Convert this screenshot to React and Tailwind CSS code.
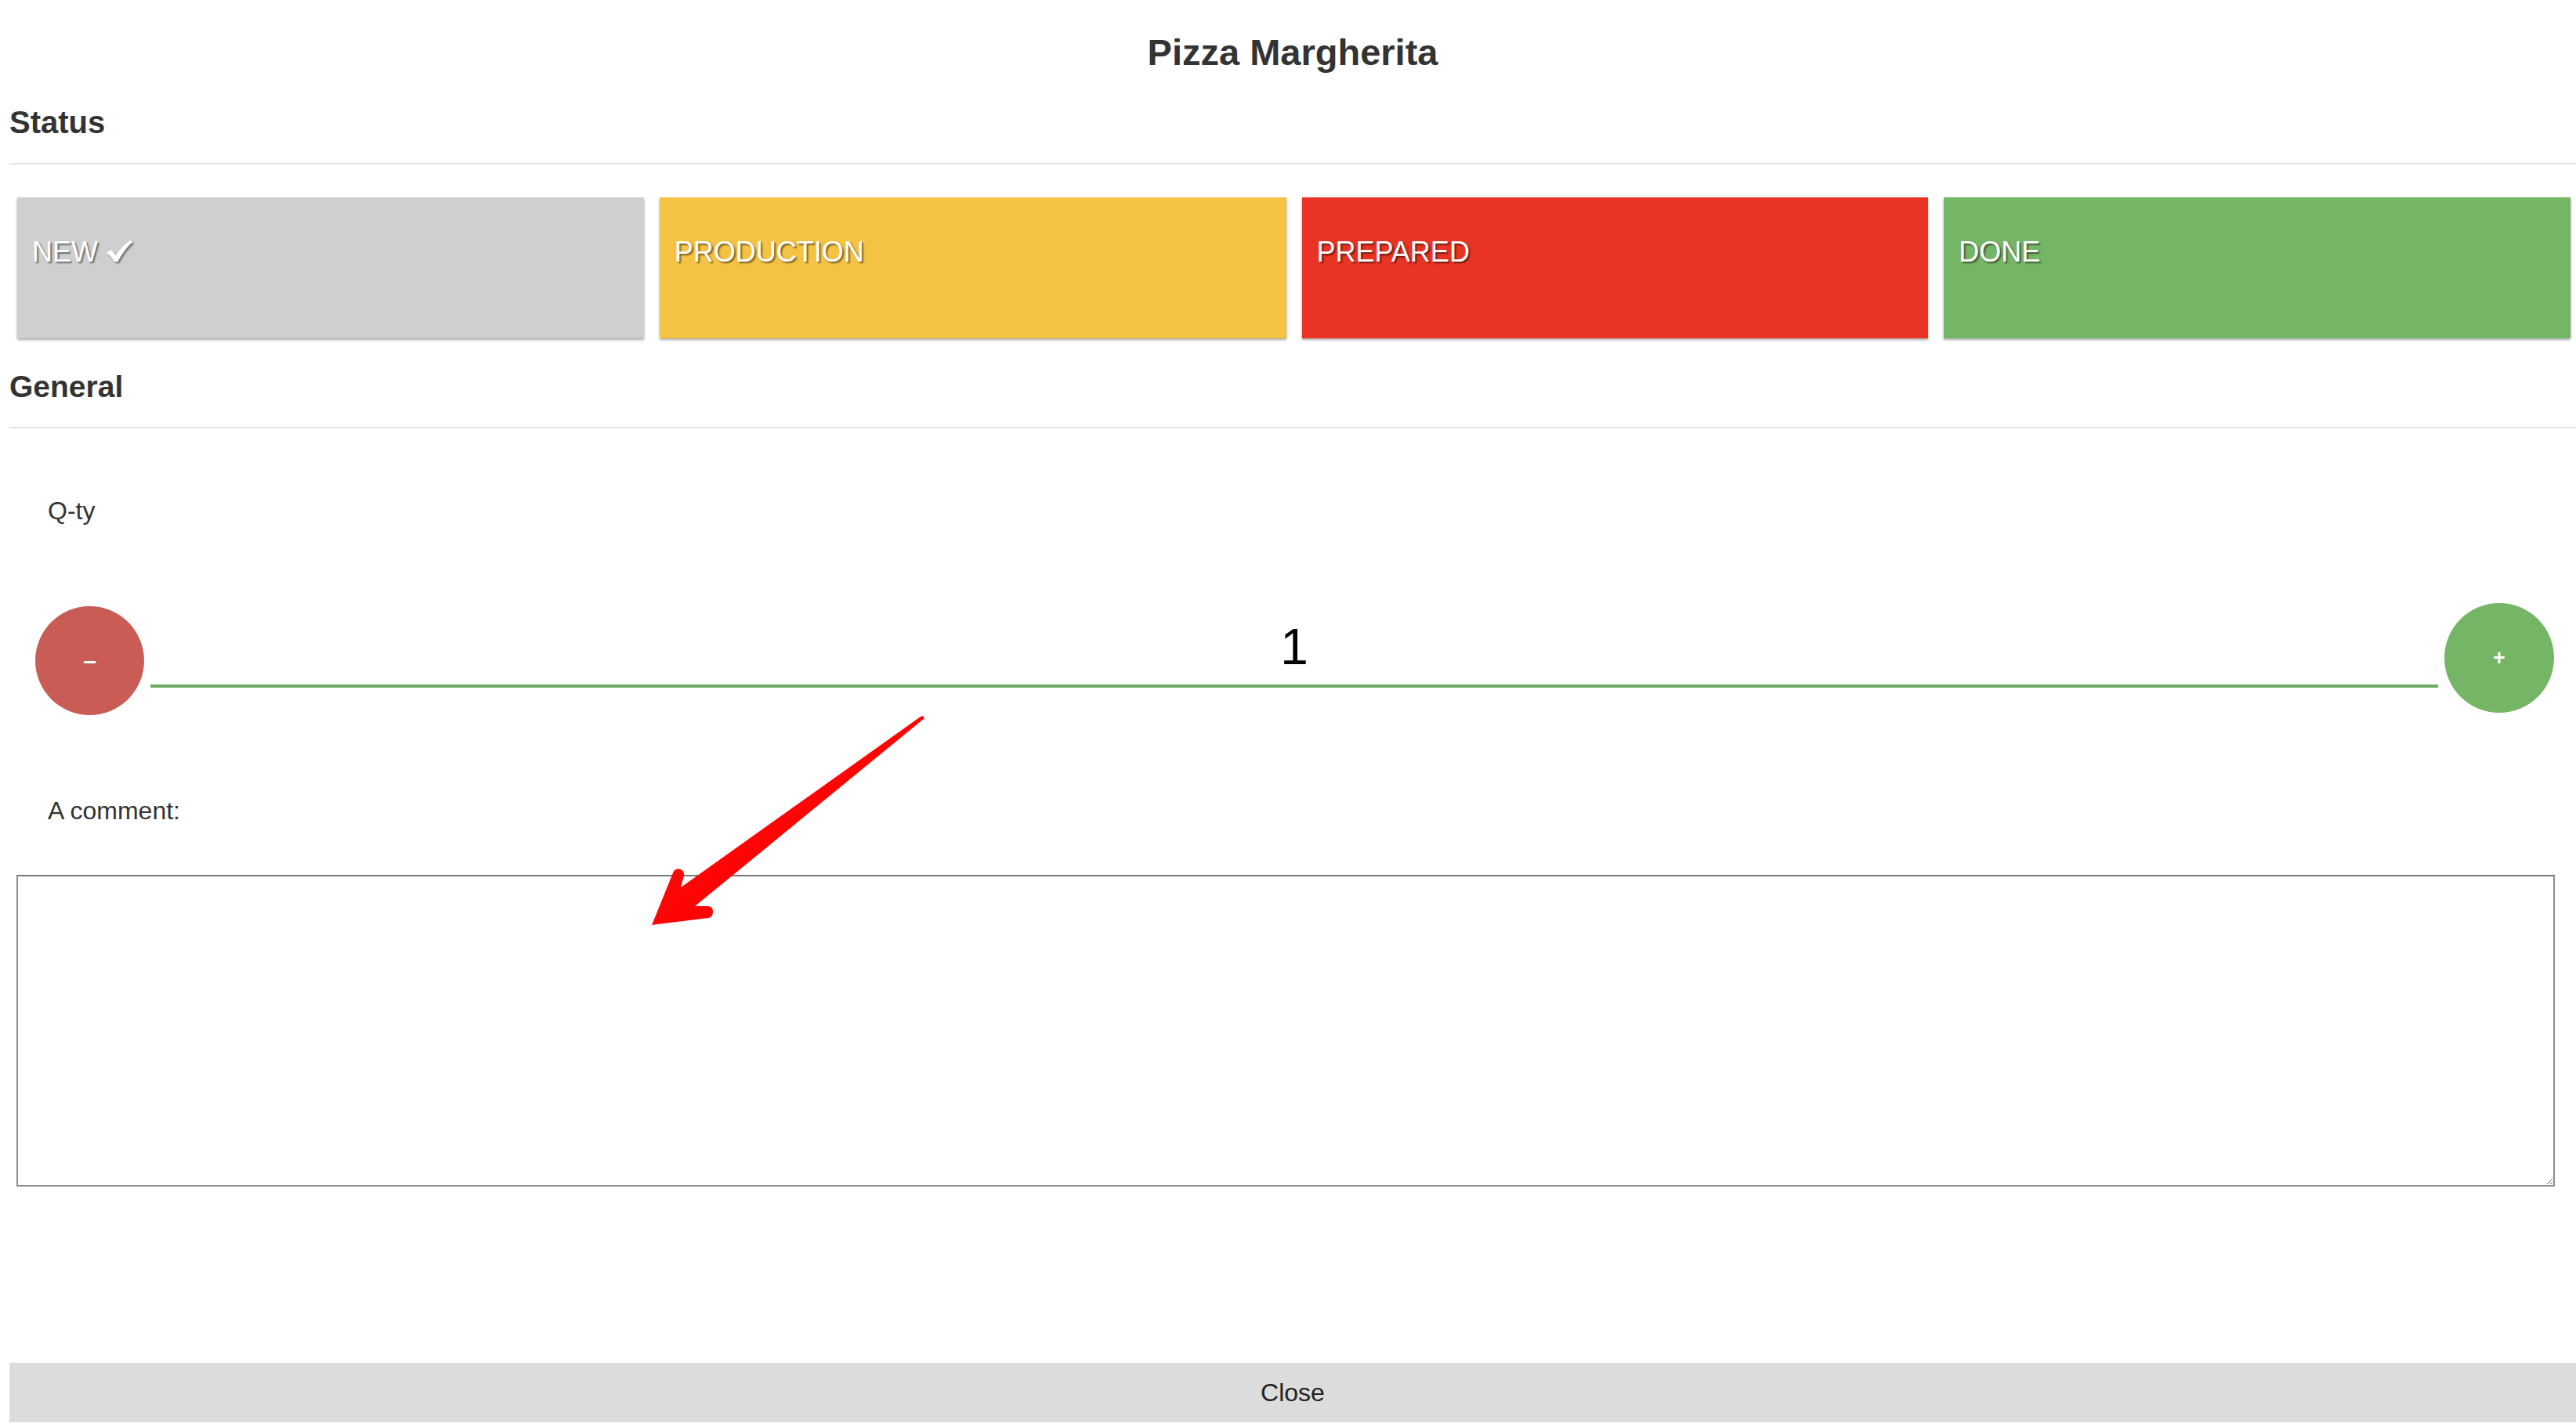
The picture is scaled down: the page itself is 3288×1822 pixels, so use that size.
import React, { useState } from 'react';

const statuses = [
  { label: 'NEW', color: 'bg-[#cfcfcf]', done: true },
  { label: 'PRODUCTION', color: 'bg-[#f5c344]' },
  { label: 'PREPARED', color: 'bg-[#e93323]' },
  { label: 'DONE', color: 'bg-[#75b566]' },
];

const Check = () => (
  <svg
    className="ml-[10px] inline-block align-baseline drop-shadow-[2px_2px_1px_rgba(0,0,0,0.45)]"
    width="34"
    height="27"
    viewBox="0 0 34 27"
  >
    <path d="M1 16 Q4 12.5 8 13 L13 19 Q20 8 31 0 L34 2 Q23 12 15.5 27 L11 27 Q7 20 1 16 Z" fill="#fff" />
  </svg>
);

const Arrow = () => (
  <svg
    className="absolute left-[820px] top-[905px] pointer-events-none"
    width="370"
    height="290"
    viewBox="0 0 370 290"
  >
    <defs>
      <linearGradient id="arrowFill" x1="0" y1="0" x2="1" y2="1">
        <stop offset="0" stopColor="#ff1a1a" />
        <stop offset="0.6" stopColor="#ff0000" />
        <stop offset="1" stopColor="#e00000" />
      </linearGradient>
    </defs>
    <path
      d="M 355 10 Q 359 8 360 12 L 67 252 L 83 252 Q 90 252 90 259 Q 90 266 84 267 L 12 276 L 40 207 Q 44 203 49 205 Q 54 208 53 213 L 49 228 L 355 10 Z"
      fill="url(#arrowFill)"
    />
  </svg>
);

const App = () => {
  const [qty, setQty] = useState(1);
  const [comment, setComment] = useState('');

  return (
    <div className="relative min-h-screen w-full bg-white font-['Liberation_Sans',Arial,sans-serif] text-[#333]">
      <div className="flex flex-col pl-[12px]">
        <h1 className="pt-[39px] text-center text-[47px] font-bold leading-[56px]">
          Pizza Margherita
        </h1>

        {/* Status */}
        <h2 className="mt-[37px] text-[40px] font-bold leading-[48px]">Status</h2>
        <div className="mt-[28px] h-[2px] bg-[#e5e5e5]" />

        <div className="mt-[42px] flex gap-[20px] pl-[10px] pr-[7px]">
          {statuses.map((s) => (
            <button
              key={s.label}
              type="button"
              className={`h-[180px] flex-1 ${s.color} pl-[19px] pt-[50px] text-left align-top shadow-[0_2px_3px_rgba(0,0,0,0.35)]`}
            >
              <div className="h-[130px] text-[36px] leading-[40px] text-white [text-shadow:2px_2px_2px_rgba(0,0,0,0.5)]">
                {s.label}
                {s.done && <Check />}
              </div>
            </button>
          ))}
        </div>

        {/* General */}
        <h2 className="mt-[38px] text-[39px] font-bold leading-[48px]">General</h2>
        <div className="mt-[27px] h-[2px] bg-[#e5e5e5]" />

        <label className="mt-[87px] ml-[49px] text-[32px] leading-[36px]">Q-ty</label>

        <div className="mt-[100px] flex items-start pr-[28px]">
          <button
            type="button"
            onClick={() => setQty((q) => Math.max(1, q - 1))}
            className="ml-[33px] mt-[4px] flex h-[139px] w-[139px] shrink-0 items-center justify-center rounded-full bg-[#c95c55] text-[30px] font-bold leading-none text-white"
          >
            –
          </button>
          <div className="mx-[8px] flex flex-1 flex-col">
            <div className="mt-[24px] h-[64px] text-center text-[64px] leading-[64px] text-black">{qty}</div>
            <div className="mt-[16px] h-[4px] bg-[#6aaa5e]" />
          </div>
          <button
            type="button"
            onClick={() => setQty((q) => q + 1)}
            className="flex h-[140px] w-[140px] shrink-0 items-center justify-center rounded-full bg-[#75b566] text-[27px] font-bold leading-none text-white"
          >
            +
          </button>
        </div>

        <label className="mt-[104px] ml-[49px] text-[32px] leading-[36px]">A comment:</label>

        <textarea
          value={comment}
          onChange={(e) => setComment(e.target.value)}
          className="mt-[64px] ml-[9px] mr-[27px] h-[398px] border-2 border-[#8c8c8c] border-t-[#767676] bg-white p-2 text-[28px] outline-none"
        />

        <button
          type="button"
          className="mt-[225px] h-[76px] w-full bg-[#dcdcdc] text-center text-[32px] leading-[76px] text-[#222]"
        >
          Close
        </button>
      </div>

      <Arrow />
    </div>
  );
};

export default App;
